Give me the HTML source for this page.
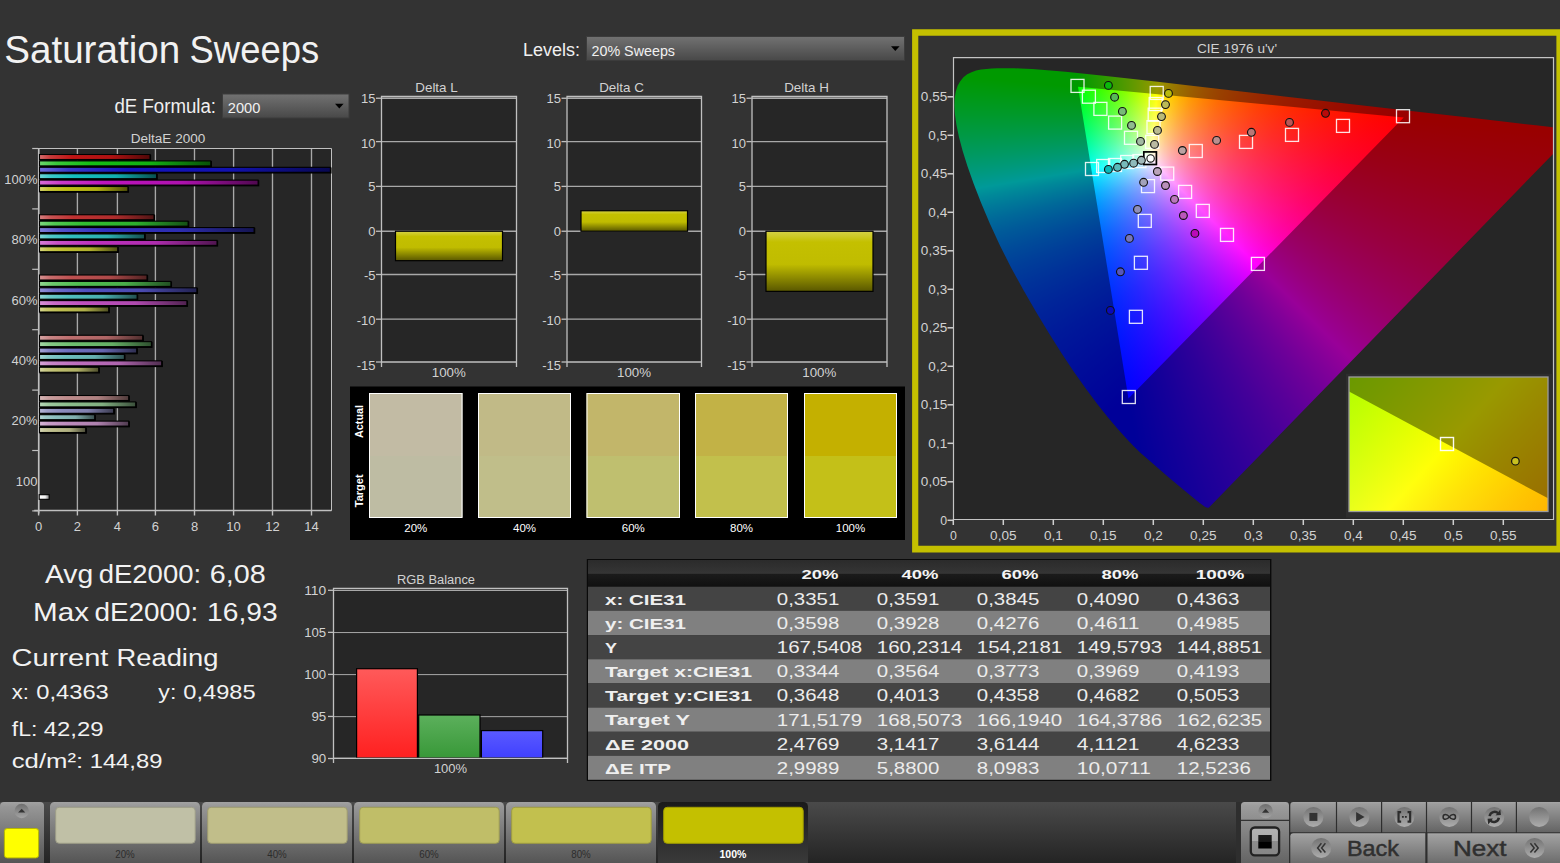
<!DOCTYPE html>
<html><head><meta charset="utf-8"><title>Saturation Sweeps</title>
<style>html,body{margin:0;padding:0}body{width:1560px;height:863px;background:#333333;position:relative;overflow:hidden;font-family:"Liberation Sans", sans-serif}</style></head><body>
<svg width="1560" height="863" viewBox="0 0 1560 863" style="position:absolute;left:0;top:0" font-family='"Liberation Sans", sans-serif'><defs><linearGradient id="g1" x1="0" y1="0" x2="0" y2="1"><stop offset="0" stop-color="#727272"/><stop offset="1" stop-color="#484848"/></linearGradient><linearGradient id="g2" x1="0" y1="0" x2="0" y2="1"><stop offset="0" stop-color="#727272"/><stop offset="1" stop-color="#484848"/></linearGradient><linearGradient id="g3" x1="0" y1="0" x2="1" y2="0"><stop offset="0" stop-color="#d76d6d"/><stop offset="0.1" stop-color="#c83a3a"/><stop offset="0.3" stop-color="#be1414"/><stop offset="0.65" stop-color="#af1212"/><stop offset="1" stop-color="#500808"/></linearGradient><linearGradient id="g4" x1="0" y1="0" x2="1" y2="0"><stop offset="0" stop-color="#6dd76d"/><stop offset="0.1" stop-color="#3ac83a"/><stop offset="0.3" stop-color="#14be14"/><stop offset="0.65" stop-color="#12af12"/><stop offset="1" stop-color="#085008"/></linearGradient><linearGradient id="g5" x1="0" y1="0" x2="1" y2="0"><stop offset="0" stop-color="#6d6dd7"/><stop offset="0.1" stop-color="#3a3ac8"/><stop offset="0.3" stop-color="#1414be"/><stop offset="0.65" stop-color="#1212af"/><stop offset="1" stop-color="#080850"/></linearGradient><linearGradient id="g6" x1="0" y1="0" x2="1" y2="0"><stop offset="0" stop-color="#6dd7d7"/><stop offset="0.1" stop-color="#3ac8c8"/><stop offset="0.3" stop-color="#14bebe"/><stop offset="0.65" stop-color="#12afaf"/><stop offset="1" stop-color="#085050"/></linearGradient><linearGradient id="g7" x1="0" y1="0" x2="1" y2="0"><stop offset="0" stop-color="#d76dd7"/><stop offset="0.1" stop-color="#c83ac8"/><stop offset="0.3" stop-color="#be14be"/><stop offset="0.65" stop-color="#af12af"/><stop offset="1" stop-color="#500850"/></linearGradient><linearGradient id="g8" x1="0" y1="0" x2="1" y2="0"><stop offset="0" stop-color="#d7d76d"/><stop offset="0.1" stop-color="#c8c83a"/><stop offset="0.3" stop-color="#bebe14"/><stop offset="0.65" stop-color="#afaf12"/><stop offset="1" stop-color="#505008"/></linearGradient><linearGradient id="g9" x1="0" y1="0" x2="1" y2="0"><stop offset="0" stop-color="#d77f7f"/><stop offset="0.1" stop-color="#c85252"/><stop offset="0.3" stop-color="#be3131"/><stop offset="0.65" stop-color="#af2d2d"/><stop offset="1" stop-color="#501515"/></linearGradient><linearGradient id="g10" x1="0" y1="0" x2="1" y2="0"><stop offset="0" stop-color="#7fd77f"/><stop offset="0.1" stop-color="#52c852"/><stop offset="0.3" stop-color="#31be31"/><stop offset="0.65" stop-color="#2daf2d"/><stop offset="1" stop-color="#155015"/></linearGradient><linearGradient id="g11" x1="0" y1="0" x2="1" y2="0"><stop offset="0" stop-color="#7f7fd7"/><stop offset="0.1" stop-color="#5252c8"/><stop offset="0.3" stop-color="#3131be"/><stop offset="0.65" stop-color="#2d2daf"/><stop offset="1" stop-color="#151550"/></linearGradient><linearGradient id="g12" x1="0" y1="0" x2="1" y2="0"><stop offset="0" stop-color="#7fd7d7"/><stop offset="0.1" stop-color="#52c8c8"/><stop offset="0.3" stop-color="#31bebe"/><stop offset="0.65" stop-color="#2dafaf"/><stop offset="1" stop-color="#155050"/></linearGradient><linearGradient id="g13" x1="0" y1="0" x2="1" y2="0"><stop offset="0" stop-color="#d77fd7"/><stop offset="0.1" stop-color="#c852c8"/><stop offset="0.3" stop-color="#be31be"/><stop offset="0.65" stop-color="#af2daf"/><stop offset="1" stop-color="#501550"/></linearGradient><linearGradient id="g14" x1="0" y1="0" x2="1" y2="0"><stop offset="0" stop-color="#d7d77f"/><stop offset="0.1" stop-color="#c8c852"/><stop offset="0.3" stop-color="#bebe31"/><stop offset="0.65" stop-color="#afaf2d"/><stop offset="1" stop-color="#505015"/></linearGradient><linearGradient id="g15" x1="0" y1="0" x2="1" y2="0"><stop offset="0" stop-color="#d79292"/><stop offset="0.1" stop-color="#c86c6c"/><stop offset="0.3" stop-color="#be5050"/><stop offset="0.65" stop-color="#af4a4a"/><stop offset="1" stop-color="#502222"/></linearGradient><linearGradient id="g16" x1="0" y1="0" x2="1" y2="0"><stop offset="0" stop-color="#92d792"/><stop offset="0.1" stop-color="#6cc86c"/><stop offset="0.3" stop-color="#50be50"/><stop offset="0.65" stop-color="#4aaf4a"/><stop offset="1" stop-color="#225022"/></linearGradient><linearGradient id="g17" x1="0" y1="0" x2="1" y2="0"><stop offset="0" stop-color="#9292d7"/><stop offset="0.1" stop-color="#6c6cc8"/><stop offset="0.3" stop-color="#5050be"/><stop offset="0.65" stop-color="#4a4aaf"/><stop offset="1" stop-color="#222250"/></linearGradient><linearGradient id="g18" x1="0" y1="0" x2="1" y2="0"><stop offset="0" stop-color="#92d7d7"/><stop offset="0.1" stop-color="#6cc8c8"/><stop offset="0.3" stop-color="#50bebe"/><stop offset="0.65" stop-color="#4aafaf"/><stop offset="1" stop-color="#225050"/></linearGradient><linearGradient id="g19" x1="0" y1="0" x2="1" y2="0"><stop offset="0" stop-color="#d792d7"/><stop offset="0.1" stop-color="#c86cc8"/><stop offset="0.3" stop-color="#be50be"/><stop offset="0.65" stop-color="#af4aaf"/><stop offset="1" stop-color="#502250"/></linearGradient><linearGradient id="g20" x1="0" y1="0" x2="1" y2="0"><stop offset="0" stop-color="#d7d792"/><stop offset="0.1" stop-color="#c8c86c"/><stop offset="0.3" stop-color="#bebe50"/><stop offset="0.65" stop-color="#afaf4a"/><stop offset="1" stop-color="#505022"/></linearGradient><linearGradient id="g21" x1="0" y1="0" x2="1" y2="0"><stop offset="0" stop-color="#d7a5a5"/><stop offset="0.1" stop-color="#c88585"/><stop offset="0.3" stop-color="#be6e6e"/><stop offset="0.65" stop-color="#af6565"/><stop offset="1" stop-color="#502e2e"/></linearGradient><linearGradient id="g22" x1="0" y1="0" x2="1" y2="0"><stop offset="0" stop-color="#a5d7a5"/><stop offset="0.1" stop-color="#85c885"/><stop offset="0.3" stop-color="#6ebe6e"/><stop offset="0.65" stop-color="#65af65"/><stop offset="1" stop-color="#2e502e"/></linearGradient><linearGradient id="g23" x1="0" y1="0" x2="1" y2="0"><stop offset="0" stop-color="#a5a5d7"/><stop offset="0.1" stop-color="#8585c8"/><stop offset="0.3" stop-color="#6e6ebe"/><stop offset="0.65" stop-color="#6565af"/><stop offset="1" stop-color="#2e2e50"/></linearGradient><linearGradient id="g24" x1="0" y1="0" x2="1" y2="0"><stop offset="0" stop-color="#a5d7d7"/><stop offset="0.1" stop-color="#85c8c8"/><stop offset="0.3" stop-color="#6ebebe"/><stop offset="0.65" stop-color="#65afaf"/><stop offset="1" stop-color="#2e5050"/></linearGradient><linearGradient id="g25" x1="0" y1="0" x2="1" y2="0"><stop offset="0" stop-color="#d7a5d7"/><stop offset="0.1" stop-color="#c885c8"/><stop offset="0.3" stop-color="#be6ebe"/><stop offset="0.65" stop-color="#af65af"/><stop offset="1" stop-color="#502e50"/></linearGradient><linearGradient id="g26" x1="0" y1="0" x2="1" y2="0"><stop offset="0" stop-color="#d7d7a5"/><stop offset="0.1" stop-color="#c8c885"/><stop offset="0.3" stop-color="#bebe6e"/><stop offset="0.65" stop-color="#afaf65"/><stop offset="1" stop-color="#50502e"/></linearGradient><linearGradient id="g27" x1="0" y1="0" x2="1" y2="0"><stop offset="0" stop-color="#d7b8b8"/><stop offset="0.1" stop-color="#c89e9e"/><stop offset="0.3" stop-color="#be8c8c"/><stop offset="0.65" stop-color="#af8181"/><stop offset="1" stop-color="#503b3b"/></linearGradient><linearGradient id="g28" x1="0" y1="0" x2="1" y2="0"><stop offset="0" stop-color="#b8d7b8"/><stop offset="0.1" stop-color="#9ec89e"/><stop offset="0.3" stop-color="#8cbe8c"/><stop offset="0.65" stop-color="#81af81"/><stop offset="1" stop-color="#3b503b"/></linearGradient><linearGradient id="g29" x1="0" y1="0" x2="1" y2="0"><stop offset="0" stop-color="#b8b8d7"/><stop offset="0.1" stop-color="#9e9ec8"/><stop offset="0.3" stop-color="#8c8cbe"/><stop offset="0.65" stop-color="#8181af"/><stop offset="1" stop-color="#3b3b50"/></linearGradient><linearGradient id="g30" x1="0" y1="0" x2="1" y2="0"><stop offset="0" stop-color="#b8d7d7"/><stop offset="0.1" stop-color="#9ec8c8"/><stop offset="0.3" stop-color="#8cbebe"/><stop offset="0.65" stop-color="#81afaf"/><stop offset="1" stop-color="#3b5050"/></linearGradient><linearGradient id="g31" x1="0" y1="0" x2="1" y2="0"><stop offset="0" stop-color="#d7b8d7"/><stop offset="0.1" stop-color="#c89ec8"/><stop offset="0.3" stop-color="#be8cbe"/><stop offset="0.65" stop-color="#af81af"/><stop offset="1" stop-color="#503b50"/></linearGradient><linearGradient id="g32" x1="0" y1="0" x2="1" y2="0"><stop offset="0" stop-color="#d7d7b8"/><stop offset="0.1" stop-color="#c8c89e"/><stop offset="0.3" stop-color="#bebe8c"/><stop offset="0.65" stop-color="#afaf81"/><stop offset="1" stop-color="#50503b"/></linearGradient><linearGradient id="g33" x1="0" y1="0" x2="1" y2="0"><stop offset="0" stop-color="#ffffff"/><stop offset="0.6" stop-color="#f0f0f0"/><stop offset="1" stop-color="#777"/></linearGradient><linearGradient id="g34" x1="0" y1="0" x2="0" y2="1"><stop offset="0" stop-color="#d6d248"/><stop offset="0.18" stop-color="#c4c000"/><stop offset="0.55" stop-color="#c0bc00"/><stop offset="1" stop-color="#595700"/></linearGradient><linearGradient id="g35" x1="0" y1="0" x2="0" y2="1"><stop offset="0" stop-color="#d6d248"/><stop offset="0.18" stop-color="#c4c000"/><stop offset="0.55" stop-color="#c0bc00"/><stop offset="1" stop-color="#595700"/></linearGradient><linearGradient id="g36" x1="0" y1="0" x2="0" y2="1"><stop offset="0" stop-color="#d6d248"/><stop offset="0.18" stop-color="#c4c000"/><stop offset="0.55" stop-color="#c0bc00"/><stop offset="1" stop-color="#595700"/></linearGradient><linearGradient id="g37" x1="0" y1="0" x2="0" y2="1"><stop offset="0" stop-color="#ff5a5a"/><stop offset="1" stop-color="#ff2020"/></linearGradient><linearGradient id="g38" x1="0" y1="0" x2="0" y2="1"><stop offset="0" stop-color="#5cb05c"/><stop offset="1" stop-color="#389838"/></linearGradient><linearGradient id="g39" x1="0" y1="0" x2="0" y2="1"><stop offset="0" stop-color="#5a5aff"/><stop offset="1" stop-color="#4040ff"/></linearGradient><linearGradient id="g40" x1="0" y1="0" x2="0" y2="1"><stop offset="0" stop-color="#2b2b2b"/><stop offset="0.5" stop-color="#353535"/><stop offset="0.52" stop-color="#1b1b1b"/><stop offset="1" stop-color="#101010"/></linearGradient><linearGradient id="g41" x1="0" y1="0" x2="0" y2="1"><stop offset="0" stop-color="#4a4a4a"/><stop offset="1" stop-color="#242424"/></linearGradient><linearGradient id="g42" x1="0" y1="0" x2="0" y2="1"><stop offset="0" stop-color="#a2a2a2"/><stop offset="0.08" stop-color="#969696"/><stop offset="1" stop-color="#555555"/></linearGradient><linearGradient id="g43" x1="0" y1="0" x2="0" y2="1"><stop offset="0" stop-color="#1a1a1a"/><stop offset="1" stop-color="#3a3a3a"/></linearGradient><linearGradient id="g44" x1="0" y1="0" x2="0" y2="1"><stop offset="0" stop-color="#6e6e6e"/><stop offset="1" stop-color="#a4a4a4"/></linearGradient><linearGradient id="g45" x1="0" y1="0" x2="0" y2="1"><stop offset="0" stop-color="#a6a6a6"/><stop offset="0.06" stop-color="#9c9c9c"/><stop offset="1" stop-color="#646464"/></linearGradient><linearGradient id="g46" x1="0" y1="0" x2="0" y2="1"><stop offset="0" stop-color="#aaaaaa"/><stop offset="0.06" stop-color="#a0a0a0"/><stop offset="1" stop-color="#6c6c6c"/></linearGradient><linearGradient id="g47" x1="0" y1="0" x2="0" y2="1"><stop offset="0" stop-color="#6e6e6e"/><stop offset="1" stop-color="#a4a4a4"/></linearGradient><linearGradient id="g48" x1="0" y1="0" x2="0" y2="1"><stop offset="0" stop-color="#b4b4b4"/><stop offset="0.5" stop-color="#aaaaaa"/><stop offset="0.5" stop-color="#8c8c8c"/><stop offset="1" stop-color="#868686"/></linearGradient><linearGradient id="g49" x1="0" y1="0" x2="0" y2="1"><stop offset="0" stop-color="#1c1c1c"/><stop offset="0.48" stop-color="#161616"/><stop offset="0.5" stop-color="#000"/><stop offset="1" stop-color="#000"/></linearGradient><linearGradient id="g50" x1="0" y1="0" x2="0" y2="1"><stop offset="0" stop-color="#727272"/><stop offset="1" stop-color="#adadad"/></linearGradient></defs><text x="4.2" y="63" font-size="38" textLength="176" lengthAdjust="spacingAndGlyphs" fill="#f2f2f2">Saturation</text>
<text x="189.6" y="63" font-size="38" textLength="129.5" lengthAdjust="spacingAndGlyphs" fill="#f2f2f2">Sweeps</text>
<text x="523" y="56" font-size="18.8" textLength="57" lengthAdjust="spacingAndGlyphs" fill="#f0f0f0">Levels:</text>
<text x="114.5" y="112.8" font-size="19.5" textLength="101.5" lengthAdjust="spacingAndGlyphs" fill="#f0f0f0">dE Formula:</text>
<rect x="222.5" y="94" width="126.5" height="24" fill="url(#g1)" stroke="#3c3c3c" stroke-width="1"/><text x="227.8" y="112.8" font-size="14.5" textLength="32.5" lengthAdjust="spacingAndGlyphs" fill="#f0f0f0">2000</text><path d="M335 103.8h8.6l-4.3 4.8z" fill="#000"/>
<rect x="586.5" y="36.5" width="318" height="24" fill="url(#g2)" stroke="#3c3c3c" stroke-width="1"/><text x="591.5" y="55.9" font-size="14.5" textLength="83.5" lengthAdjust="spacingAndGlyphs" fill="#f0f0f0">20% Sweeps</text><path d="M891 46.3h8.6l-4.3 4.8z" fill="#000"/>
<rect x="38.2" y="148" width="292.8" height="362.5" fill="#262626"/>
<text x="168" y="143" font-size="12.5" text-anchor="middle" textLength="74.5" lengthAdjust="spacingAndGlyphs" fill="#d2d2d2">DeltaE 2000</text>
<line x1="77.4" y1="148" x2="77.4" y2="510.5" stroke="#a8a8a8" stroke-width="1.35"/>
<line x1="117.4" y1="148" x2="117.4" y2="510.5" stroke="#a8a8a8" stroke-width="1.35"/>
<line x1="155.4" y1="148" x2="155.4" y2="510.5" stroke="#a8a8a8" stroke-width="1.35"/>
<line x1="194.5" y1="148" x2="194.5" y2="510.5" stroke="#a8a8a8" stroke-width="1.35"/>
<line x1="233.6" y1="148" x2="233.6" y2="510.5" stroke="#a8a8a8" stroke-width="1.35"/>
<line x1="272.5" y1="148" x2="272.5" y2="510.5" stroke="#a8a8a8" stroke-width="1.35"/>
<line x1="311.5" y1="148" x2="311.5" y2="510.5" stroke="#a8a8a8" stroke-width="1.35"/>
<path d="M38.7 148.5H331.5V510.5H38.7Z" fill="none" stroke="#c0c0c0" stroke-width="1"/>
<line x1="38.7" y1="148" x2="38.7" y2="513.5" stroke="#c0c0c0" stroke-width="1.6"/>
<line x1="34.2" y1="510.5" x2="331.5" y2="510.5" stroke="#c0c0c0" stroke-width="1.6"/>
<line x1="38.6" y1="510.5" x2="38.6" y2="515.5" stroke="#c0c0c0" stroke-width="1.4"/>
<text x="38.6" y="531" font-size="13" text-anchor="middle" fill="#d2d2d2">0</text>
<line x1="77.4" y1="510.5" x2="77.4" y2="515.5" stroke="#c0c0c0" stroke-width="1.4"/>
<text x="77.4" y="531" font-size="13" text-anchor="middle" fill="#d2d2d2">2</text>
<line x1="117.4" y1="510.5" x2="117.4" y2="515.5" stroke="#c0c0c0" stroke-width="1.4"/>
<text x="117.4" y="531" font-size="13" text-anchor="middle" fill="#d2d2d2">4</text>
<line x1="155.4" y1="510.5" x2="155.4" y2="515.5" stroke="#c0c0c0" stroke-width="1.4"/>
<text x="155.4" y="531" font-size="13" text-anchor="middle" fill="#d2d2d2">6</text>
<line x1="194.5" y1="510.5" x2="194.5" y2="515.5" stroke="#c0c0c0" stroke-width="1.4"/>
<text x="194.5" y="531" font-size="13" text-anchor="middle" fill="#d2d2d2">8</text>
<line x1="233.6" y1="510.5" x2="233.6" y2="515.5" stroke="#c0c0c0" stroke-width="1.4"/>
<text x="233.6" y="531" font-size="13" text-anchor="middle" fill="#d2d2d2">10</text>
<line x1="272.5" y1="510.5" x2="272.5" y2="515.5" stroke="#c0c0c0" stroke-width="1.4"/>
<text x="272.5" y="531" font-size="13" text-anchor="middle" fill="#d2d2d2">12</text>
<line x1="311.5" y1="510.5" x2="311.5" y2="515.5" stroke="#c0c0c0" stroke-width="1.4"/>
<text x="311.5" y="531" font-size="13" text-anchor="middle" fill="#d2d2d2">14</text>
<line x1="32.2" y1="148.5" x2="38.2" y2="148.5" stroke="#c0c0c0" stroke-width="1.2"/>
<line x1="32.2" y1="208.9" x2="38.2" y2="208.9" stroke="#c0c0c0" stroke-width="1.2"/>
<line x1="32.2" y1="269.3" x2="38.2" y2="269.3" stroke="#c0c0c0" stroke-width="1.2"/>
<line x1="32.2" y1="329.7" x2="38.2" y2="329.7" stroke="#c0c0c0" stroke-width="1.2"/>
<line x1="32.2" y1="390.1" x2="38.2" y2="390.1" stroke="#c0c0c0" stroke-width="1.2"/>
<line x1="32.2" y1="450.5" x2="38.2" y2="450.5" stroke="#c0c0c0" stroke-width="1.2"/>
<line x1="32.2" y1="510.9" x2="38.2" y2="510.9" stroke="#c0c0c0" stroke-width="1.2"/>
<rect x="40.1" y="155.2" width="110.5" height="5" fill="#000" stroke="#000" stroke-width="1.1"/><rect x="39.5" y="154.5" width="110.5" height="5" fill="url(#g3)" stroke="#000" stroke-width="1.1"/>
<rect x="40.1" y="161.6" width="171.3" height="5" fill="#000" stroke="#000" stroke-width="1.1"/><rect x="39.5" y="160.9" width="171.3" height="5" fill="url(#g4)" stroke="#000" stroke-width="1.1"/>
<rect x="40.1" y="168" width="290.9" height="5" fill="#000" stroke="#000" stroke-width="1.1"/><rect x="39.5" y="167.3" width="290.9" height="5" fill="url(#g5)" stroke="#000" stroke-width="1.1"/>
<rect x="40.1" y="174.4" width="117.1" height="5" fill="#000" stroke="#000" stroke-width="1.1"/><rect x="39.5" y="173.7" width="117.1" height="5" fill="url(#g6)" stroke="#000" stroke-width="1.1"/>
<rect x="40.1" y="180.8" width="218.6" height="5" fill="#000" stroke="#000" stroke-width="1.1"/><rect x="39.5" y="180.1" width="218.6" height="5" fill="url(#g7)" stroke="#000" stroke-width="1.1"/>
<rect x="40.1" y="187.2" width="88.4" height="5" fill="#000" stroke="#000" stroke-width="1.1"/><rect x="39.5" y="186.5" width="88.4" height="5" fill="url(#g8)" stroke="#000" stroke-width="1.1"/>
<text x="37.5" y="184.2" font-size="13" text-anchor="end" fill="#d2d2d2">100%</text>
<rect x="40.1" y="215.45" width="114.5" height="5" fill="#000" stroke="#000" stroke-width="1.1"/><rect x="39.5" y="214.75" width="114.5" height="5" fill="url(#g9)" stroke="#000" stroke-width="1.1"/>
<rect x="40.1" y="221.85" width="148.6" height="5" fill="#000" stroke="#000" stroke-width="1.1"/><rect x="39.5" y="221.15" width="148.6" height="5" fill="url(#g10)" stroke="#000" stroke-width="1.1"/>
<rect x="40.1" y="228.25" width="214.6" height="5" fill="#000" stroke="#000" stroke-width="1.1"/><rect x="39.5" y="227.55" width="214.6" height="5" fill="url(#g11)" stroke="#000" stroke-width="1.1"/>
<rect x="40.1" y="234.65" width="105.1" height="5" fill="#000" stroke="#000" stroke-width="1.1"/><rect x="39.5" y="233.95" width="105.1" height="5" fill="url(#g12)" stroke="#000" stroke-width="1.1"/>
<rect x="40.1" y="241.05" width="177.5" height="5" fill="#000" stroke="#000" stroke-width="1.1"/><rect x="39.5" y="240.35" width="177.5" height="5" fill="url(#g13)" stroke="#000" stroke-width="1.1"/>
<rect x="40.1" y="247.45" width="78.2" height="5" fill="#000" stroke="#000" stroke-width="1.1"/><rect x="39.5" y="246.75" width="78.2" height="5" fill="url(#g14)" stroke="#000" stroke-width="1.1"/>
<text x="37.5" y="244.45" font-size="13" text-anchor="end" fill="#d2d2d2">80%</text>
<rect x="40.1" y="275.7" width="107.5" height="5" fill="#000" stroke="#000" stroke-width="1.1"/><rect x="39.5" y="275" width="107.5" height="5" fill="url(#g15)" stroke="#000" stroke-width="1.1"/>
<rect x="40.1" y="282.1" width="131.4" height="5" fill="#000" stroke="#000" stroke-width="1.1"/><rect x="39.5" y="281.4" width="131.4" height="5" fill="url(#g16)" stroke="#000" stroke-width="1.1"/>
<rect x="40.1" y="288.5" width="157.4" height="5" fill="#000" stroke="#000" stroke-width="1.1"/><rect x="39.5" y="287.8" width="157.4" height="5" fill="url(#g17)" stroke="#000" stroke-width="1.1"/>
<rect x="40.1" y="294.9" width="97.6" height="5" fill="#000" stroke="#000" stroke-width="1.1"/><rect x="39.5" y="294.2" width="97.6" height="5" fill="url(#g18)" stroke="#000" stroke-width="1.1"/>
<rect x="40.1" y="301.3" width="147.4" height="5" fill="#000" stroke="#000" stroke-width="1.1"/><rect x="39.5" y="300.6" width="147.4" height="5" fill="url(#g19)" stroke="#000" stroke-width="1.1"/>
<rect x="40.1" y="307.7" width="69.2" height="5" fill="#000" stroke="#000" stroke-width="1.1"/><rect x="39.5" y="307" width="69.2" height="5" fill="url(#g20)" stroke="#000" stroke-width="1.1"/>
<text x="37.5" y="304.7" font-size="13" text-anchor="end" fill="#d2d2d2">60%</text>
<rect x="40.1" y="335.95" width="103.2" height="5" fill="#000" stroke="#000" stroke-width="1.1"/><rect x="39.5" y="335.25" width="103.2" height="5" fill="url(#g21)" stroke="#000" stroke-width="1.1"/>
<rect x="40.1" y="342.35" width="111.9" height="5" fill="#000" stroke="#000" stroke-width="1.1"/><rect x="39.5" y="341.65" width="111.9" height="5" fill="url(#g22)" stroke="#000" stroke-width="1.1"/>
<rect x="40.1" y="348.75" width="97.2" height="5" fill="#000" stroke="#000" stroke-width="1.1"/><rect x="39.5" y="348.05" width="97.2" height="5" fill="url(#g23)" stroke="#000" stroke-width="1.1"/>
<rect x="40.1" y="355.15" width="84.9" height="5" fill="#000" stroke="#000" stroke-width="1.1"/><rect x="39.5" y="354.45" width="84.9" height="5" fill="url(#g24)" stroke="#000" stroke-width="1.1"/>
<rect x="40.1" y="361.55" width="122.2" height="5" fill="#000" stroke="#000" stroke-width="1.1"/><rect x="39.5" y="360.85" width="122.2" height="5" fill="url(#g25)" stroke="#000" stroke-width="1.1"/>
<rect x="40.1" y="367.95" width="59.2" height="5" fill="#000" stroke="#000" stroke-width="1.1"/><rect x="39.5" y="367.25" width="59.2" height="5" fill="url(#g26)" stroke="#000" stroke-width="1.1"/>
<text x="37.5" y="364.95" font-size="13" text-anchor="end" fill="#d2d2d2">40%</text>
<rect x="40.1" y="396.2" width="89.2" height="5" fill="#000" stroke="#000" stroke-width="1.1"/><rect x="39.5" y="395.5" width="89.2" height="5" fill="url(#g27)" stroke="#000" stroke-width="1.1"/>
<rect x="40.1" y="402.6" width="96.2" height="5" fill="#000" stroke="#000" stroke-width="1.1"/><rect x="39.5" y="401.9" width="96.2" height="5" fill="url(#g28)" stroke="#000" stroke-width="1.1"/>
<rect x="40.1" y="409" width="74.2" height="5" fill="#000" stroke="#000" stroke-width="1.1"/><rect x="39.5" y="408.3" width="74.2" height="5" fill="url(#g29)" stroke="#000" stroke-width="1.1"/>
<rect x="40.1" y="415.4" width="55.2" height="5" fill="#000" stroke="#000" stroke-width="1.1"/><rect x="39.5" y="414.7" width="55.2" height="5" fill="url(#g30)" stroke="#000" stroke-width="1.1"/>
<rect x="40.1" y="421.8" width="89.2" height="5" fill="#000" stroke="#000" stroke-width="1.1"/><rect x="39.5" y="421.1" width="89.2" height="5" fill="url(#g31)" stroke="#000" stroke-width="1.1"/>
<rect x="40.1" y="428.2" width="46.2" height="5" fill="#000" stroke="#000" stroke-width="1.1"/><rect x="39.5" y="427.5" width="46.2" height="5" fill="url(#g32)" stroke="#000" stroke-width="1.1"/>
<text x="37.5" y="425.2" font-size="13" text-anchor="end" fill="#d2d2d2">20%</text>
<text x="37.5" y="486" font-size="13" text-anchor="end" fill="#d2d2d2">100</text>
<rect x="39.2" y="494.7" width="10" height="4.6" fill="url(#g33)" stroke="#000" stroke-width="1.1"/>
<rect x="381" y="96" width="135.5" height="266" fill="#262626"/><line x1="381" y1="98.25" x2="516.5" y2="98.25" stroke="#a8a8a8" stroke-width="1.3"/><line x1="376" y1="98.25" x2="381" y2="98.25" stroke="#c0c0c0" stroke-width="1.3"/><line x1="381" y1="141.6" x2="516.5" y2="141.6" stroke="#a8a8a8" stroke-width="1.3"/><line x1="376" y1="141.6" x2="381" y2="141.6" stroke="#c0c0c0" stroke-width="1.3"/><line x1="381" y1="186.4" x2="516.5" y2="186.4" stroke="#a8a8a8" stroke-width="1.3"/><line x1="376" y1="186.4" x2="381" y2="186.4" stroke="#c0c0c0" stroke-width="1.3"/><line x1="381" y1="231.25" x2="516.5" y2="231.25" stroke="#a8a8a8" stroke-width="1.3"/><line x1="376" y1="231.25" x2="381" y2="231.25" stroke="#c0c0c0" stroke-width="1.3"/><line x1="381" y1="274.5" x2="516.5" y2="274.5" stroke="#a8a8a8" stroke-width="1.3"/><line x1="376" y1="274.5" x2="381" y2="274.5" stroke="#c0c0c0" stroke-width="1.3"/><line x1="381" y1="319.2" x2="516.5" y2="319.2" stroke="#a8a8a8" stroke-width="1.3"/><line x1="376" y1="319.2" x2="381" y2="319.2" stroke="#c0c0c0" stroke-width="1.3"/><text x="375.5" y="103.45" font-size="13" text-anchor="end" fill="#d2d2d2">15</text><text x="375.5" y="148.3" font-size="13" text-anchor="end" fill="#d2d2d2">10</text><text x="375.5" y="191.45" font-size="13" text-anchor="end" fill="#d2d2d2">5</text><text x="375.5" y="236.45" font-size="13" text-anchor="end" fill="#d2d2d2">0</text><text x="375.5" y="280.2" font-size="13" text-anchor="end" fill="#d2d2d2">-5</text><text x="375.5" y="324.7" font-size="13" text-anchor="end" fill="#d2d2d2">-10</text><text x="375.5" y="369.5" font-size="13" text-anchor="end" fill="#d2d2d2">-15</text><line x1="376" y1="362" x2="381" y2="362" stroke="#c0c0c0" stroke-width="1.3"/><path d="M381.5 367V96.5H516.5V367" fill="none" stroke="#c0c0c0" stroke-width="1.3"/><line x1="381" y1="362" x2="516.5" y2="362" stroke="#c0c0c0" stroke-width="1.3"/><rect x="395.5" y="231.25" width="107" height="29.44" fill="url(#g34)" stroke="#000" stroke-width="1.2"/><text x="436.5" y="92" font-size="13.4" text-anchor="middle" fill="#d2d2d2">Delta L</text><text x="448.75" y="377.4" font-size="13.3" text-anchor="middle" fill="#d2d2d2">100%</text>
<rect x="566.5" y="96" width="135" height="266" fill="#262626"/><line x1="566.5" y1="98.25" x2="701.5" y2="98.25" stroke="#a8a8a8" stroke-width="1.3"/><line x1="561.5" y1="98.25" x2="566.5" y2="98.25" stroke="#c0c0c0" stroke-width="1.3"/><line x1="566.5" y1="141.6" x2="701.5" y2="141.6" stroke="#a8a8a8" stroke-width="1.3"/><line x1="561.5" y1="141.6" x2="566.5" y2="141.6" stroke="#c0c0c0" stroke-width="1.3"/><line x1="566.5" y1="186.4" x2="701.5" y2="186.4" stroke="#a8a8a8" stroke-width="1.3"/><line x1="561.5" y1="186.4" x2="566.5" y2="186.4" stroke="#c0c0c0" stroke-width="1.3"/><line x1="566.5" y1="231.25" x2="701.5" y2="231.25" stroke="#a8a8a8" stroke-width="1.3"/><line x1="561.5" y1="231.25" x2="566.5" y2="231.25" stroke="#c0c0c0" stroke-width="1.3"/><line x1="566.5" y1="274.5" x2="701.5" y2="274.5" stroke="#a8a8a8" stroke-width="1.3"/><line x1="561.5" y1="274.5" x2="566.5" y2="274.5" stroke="#c0c0c0" stroke-width="1.3"/><line x1="566.5" y1="319.2" x2="701.5" y2="319.2" stroke="#a8a8a8" stroke-width="1.3"/><line x1="561.5" y1="319.2" x2="566.5" y2="319.2" stroke="#c0c0c0" stroke-width="1.3"/><text x="561" y="103.45" font-size="13" text-anchor="end" fill="#d2d2d2">15</text><text x="561" y="148.3" font-size="13" text-anchor="end" fill="#d2d2d2">10</text><text x="561" y="191.45" font-size="13" text-anchor="end" fill="#d2d2d2">5</text><text x="561" y="236.45" font-size="13" text-anchor="end" fill="#d2d2d2">0</text><text x="561" y="280.2" font-size="13" text-anchor="end" fill="#d2d2d2">-5</text><text x="561" y="324.7" font-size="13" text-anchor="end" fill="#d2d2d2">-10</text><text x="561" y="369.5" font-size="13" text-anchor="end" fill="#d2d2d2">-15</text><line x1="561.5" y1="362" x2="566.5" y2="362" stroke="#c0c0c0" stroke-width="1.3"/><path d="M567 367V96.5H701.5V367" fill="none" stroke="#c0c0c0" stroke-width="1.3"/><line x1="566.5" y1="362" x2="701.5" y2="362" stroke="#c0c0c0" stroke-width="1.3"/><rect x="581" y="210.74" width="106.5" height="20.51" fill="url(#g35)" stroke="#000" stroke-width="1.2"/><text x="621.5" y="92" font-size="13.4" text-anchor="middle" fill="#d2d2d2">Delta C</text><text x="634" y="377.4" font-size="13.3" text-anchor="middle" fill="#d2d2d2">100%</text>
<rect x="751.5" y="96" width="135.5" height="266" fill="#262626"/><line x1="751.5" y1="98.25" x2="887" y2="98.25" stroke="#a8a8a8" stroke-width="1.3"/><line x1="746.5" y1="98.25" x2="751.5" y2="98.25" stroke="#c0c0c0" stroke-width="1.3"/><line x1="751.5" y1="141.6" x2="887" y2="141.6" stroke="#a8a8a8" stroke-width="1.3"/><line x1="746.5" y1="141.6" x2="751.5" y2="141.6" stroke="#c0c0c0" stroke-width="1.3"/><line x1="751.5" y1="186.4" x2="887" y2="186.4" stroke="#a8a8a8" stroke-width="1.3"/><line x1="746.5" y1="186.4" x2="751.5" y2="186.4" stroke="#c0c0c0" stroke-width="1.3"/><line x1="751.5" y1="231.25" x2="887" y2="231.25" stroke="#a8a8a8" stroke-width="1.3"/><line x1="746.5" y1="231.25" x2="751.5" y2="231.25" stroke="#c0c0c0" stroke-width="1.3"/><line x1="751.5" y1="274.5" x2="887" y2="274.5" stroke="#a8a8a8" stroke-width="1.3"/><line x1="746.5" y1="274.5" x2="751.5" y2="274.5" stroke="#c0c0c0" stroke-width="1.3"/><line x1="751.5" y1="319.2" x2="887" y2="319.2" stroke="#a8a8a8" stroke-width="1.3"/><line x1="746.5" y1="319.2" x2="751.5" y2="319.2" stroke="#c0c0c0" stroke-width="1.3"/><text x="746" y="103.45" font-size="13" text-anchor="end" fill="#d2d2d2">15</text><text x="746" y="148.3" font-size="13" text-anchor="end" fill="#d2d2d2">10</text><text x="746" y="191.45" font-size="13" text-anchor="end" fill="#d2d2d2">5</text><text x="746" y="236.45" font-size="13" text-anchor="end" fill="#d2d2d2">0</text><text x="746" y="280.2" font-size="13" text-anchor="end" fill="#d2d2d2">-5</text><text x="746" y="324.7" font-size="13" text-anchor="end" fill="#d2d2d2">-10</text><text x="746" y="369.5" font-size="13" text-anchor="end" fill="#d2d2d2">-15</text><line x1="746.5" y1="362" x2="751.5" y2="362" stroke="#c0c0c0" stroke-width="1.3"/><path d="M752 367V96.5H887V367" fill="none" stroke="#c0c0c0" stroke-width="1.3"/><line x1="751.5" y1="362" x2="887" y2="362" stroke="#c0c0c0" stroke-width="1.3"/><rect x="766" y="231.25" width="107" height="60.11" fill="url(#g36)" stroke="#000" stroke-width="1.2"/><text x="806.5" y="92" font-size="13.4" text-anchor="middle" fill="#d2d2d2">Delta H</text><text x="819.25" y="377.4" font-size="13.3" text-anchor="middle" fill="#d2d2d2">100%</text>
<rect x="350" y="386.5" width="555" height="153.5" fill="#000"/>
<rect x="369" y="393" width="93.5" height="63" fill="#c2bba4"/>
<rect x="369" y="456" width="93.5" height="61.5" fill="#bebca3"/>
<rect x="369.5" y="393.5" width="92.5" height="124" fill="none" stroke="#fff" stroke-width="1"/>
<text x="415.75" y="532" font-size="11.5" text-anchor="middle" fill="#fff">20%</text>
<rect x="478" y="393" width="93" height="63" fill="#c1ba87"/>
<rect x="478" y="456" width="93" height="61.5" fill="#c0be8a"/>
<rect x="478.5" y="393.5" width="92" height="124" fill="none" stroke="#fff" stroke-width="1"/>
<text x="524.5" y="532" font-size="11.5" text-anchor="middle" fill="#fff">40%</text>
<rect x="586.5" y="393" width="93.5" height="63" fill="#c2b66a"/>
<rect x="586.5" y="456" width="93.5" height="61.5" fill="#bfbf6f"/>
<rect x="587" y="393.5" width="92.5" height="124" fill="none" stroke="#fff" stroke-width="1"/>
<text x="633.25" y="532" font-size="11.5" text-anchor="middle" fill="#fff">60%</text>
<rect x="695" y="393" width="93" height="63" fill="#c2b246"/>
<rect x="695" y="456" width="93" height="61.5" fill="#c2c04c"/>
<rect x="695.5" y="393.5" width="92" height="124" fill="none" stroke="#fff" stroke-width="1"/>
<text x="741.5" y="532" font-size="11.5" text-anchor="middle" fill="#fff">80%</text>
<rect x="804" y="393" width="93" height="63" fill="#c4b000"/>
<rect x="804" y="456" width="93" height="61.5" fill="#c4c018"/>
<rect x="804.5" y="393.5" width="92" height="124" fill="none" stroke="#fff" stroke-width="1"/>
<text x="850.5" y="532" font-size="11.5" text-anchor="middle" fill="#fff">100%</text>
<text transform="translate(362.5,438) rotate(-90)" font-size="11.5" font-weight="bold" fill="#fff" textLength="33" lengthAdjust="spacingAndGlyphs">Actual</text>
<text transform="translate(362.5,507.3) rotate(-90)" font-size="11.5" font-weight="bold" fill="#fff" textLength="33" lengthAdjust="spacingAndGlyphs">Target</text>
<path fill-rule="evenodd" fill="#c4c000" d="M912.1 29.3H1566V552.6H912.1ZM918.3 35.8H1556.4V545.8H918.3Z"/>
<text x="1237" y="52.5" font-size="12.5" text-anchor="middle" textLength="80" lengthAdjust="spacingAndGlyphs" fill="#d2d2d2">CIE 1976 u'v'</text>
<rect x="953" y="58" width="600.5" height="461.5" fill="#262626"/>
<text x="45.01" y="582.5" font-size="25.5" textLength="48.2" lengthAdjust="spacingAndGlyphs" fill="#f2f2f2">Avg</text>
<text x="98.71" y="582.5" font-size="25.5" textLength="102.39" lengthAdjust="spacingAndGlyphs" fill="#f2f2f2">dE2000:</text>
<text x="209.71" y="582.5" font-size="25.5" textLength="56" lengthAdjust="spacingAndGlyphs" fill="#f2f2f2">6,08</text>
<text x="33.01" y="620.5" font-size="25.5" textLength="55.99" lengthAdjust="spacingAndGlyphs" fill="#f2f2f2">Max</text>
<text x="94.51" y="620.5" font-size="25.5" textLength="103.8" lengthAdjust="spacingAndGlyphs" fill="#f2f2f2">dE2000:</text>
<text x="207.11" y="620.5" font-size="25.5" textLength="70.49" lengthAdjust="spacingAndGlyphs" fill="#f2f2f2">16,93</text>
<text x="11.64" y="665.5" font-size="24.7" textLength="96.82" lengthAdjust="spacingAndGlyphs" fill="#f2f2f2">Current</text>
<text x="116.54" y="665.5" font-size="24.7" textLength="101.82" lengthAdjust="spacingAndGlyphs" fill="#f2f2f2">Reading</text>
<text x="11.77" y="698.8" font-size="21" textLength="17.19" lengthAdjust="spacingAndGlyphs" fill="#f2f2f2">x:</text>
<text x="36.27" y="698.8" font-size="21" textLength="72.49" lengthAdjust="spacingAndGlyphs" fill="#f2f2f2">0,4363</text>
<text x="158.36" y="698.8" font-size="21" textLength="17.99" lengthAdjust="spacingAndGlyphs" fill="#f2f2f2">y:</text>
<text x="183.36" y="698.8" font-size="21" textLength="72.29" lengthAdjust="spacingAndGlyphs" fill="#f2f2f2">0,4985</text>
<text x="11.77" y="736.4" font-size="21" textLength="25.59" lengthAdjust="spacingAndGlyphs" fill="#f2f2f2">fL:</text>
<text x="43.77" y="736.4" font-size="21" textLength="59.79" lengthAdjust="spacingAndGlyphs" fill="#f2f2f2">42,29</text>
<text x="11.77" y="768.4" font-size="21" textLength="71.39" lengthAdjust="spacingAndGlyphs" fill="#f2f2f2">cd/m²:</text>
<text x="89.67" y="768.4" font-size="21" textLength="72.79" lengthAdjust="spacingAndGlyphs" fill="#f2f2f2">144,89</text>
<rect x="333" y="588" width="234.5" height="170" fill="#262626"/>
<text x="436" y="583.5" font-size="12.5" text-anchor="middle" textLength="78" lengthAdjust="spacingAndGlyphs" fill="#d2d2d2">RGB Balance</text>
<line x1="333" y1="590.5" x2="567.5" y2="590.5" stroke="#a8a8a8" stroke-width="1"/>
<line x1="328" y1="590.3" x2="333" y2="590.3" stroke="#c0c0c0" stroke-width="1.3"/>
<text x="326.2" y="594.6" font-size="12.5" text-anchor="end" textLength="22" lengthAdjust="spacingAndGlyphs" fill="#d2d2d2">110</text>
<line x1="333" y1="632.55" x2="567.5" y2="632.55" stroke="#a8a8a8" stroke-width="1"/>
<line x1="328" y1="632.35" x2="333" y2="632.35" stroke="#c0c0c0" stroke-width="1.3"/>
<text x="326.2" y="636.65" font-size="12.5" text-anchor="end" textLength="22" lengthAdjust="spacingAndGlyphs" fill="#d2d2d2">105</text>
<line x1="333" y1="674.6" x2="567.5" y2="674.6" stroke="#a8a8a8" stroke-width="1"/>
<line x1="328" y1="674.4" x2="333" y2="674.4" stroke="#c0c0c0" stroke-width="1.3"/>
<text x="326.2" y="678.7" font-size="12.5" text-anchor="end" textLength="22" lengthAdjust="spacingAndGlyphs" fill="#d2d2d2">100</text>
<line x1="333" y1="716.65" x2="567.5" y2="716.65" stroke="#a8a8a8" stroke-width="1"/>
<line x1="328" y1="716.45" x2="333" y2="716.45" stroke="#c0c0c0" stroke-width="1.3"/>
<text x="326.2" y="720.75" font-size="12.5" text-anchor="end" textLength="14.8" lengthAdjust="spacingAndGlyphs" fill="#d2d2d2">95</text>
<line x1="328" y1="758.5" x2="333" y2="758.5" stroke="#c0c0c0" stroke-width="1.3"/>
<text x="326.2" y="762.8" font-size="12.5" text-anchor="end" textLength="14.8" lengthAdjust="spacingAndGlyphs" fill="#d2d2d2">90</text>
<path d="M333.5 763V588.5H567.5V763" fill="none" stroke="#c0c0c0" stroke-width="1.3"/>
<line x1="333" y1="758.3" x2="567.5" y2="758.3" stroke="#c0c0c0" stroke-width="1.3"/>
<rect x="356.6" y="668.7" width="60.8" height="89.3" fill="url(#g37)" stroke="#000" stroke-width="1.2"/>
<rect x="418.7" y="715" width="61.3" height="43" fill="url(#g38)" stroke="#000" stroke-width="1.2"/>
<rect x="481.4" y="730.6" width="61.3" height="27.4" fill="url(#g39)" stroke="#000" stroke-width="1.2"/>
<line x1="333" y1="758.3" x2="567.5" y2="758.3" stroke="#c0c0c0" stroke-width="1.3"/>
<text x="450.5" y="773" font-size="13" text-anchor="middle" fill="#d2d2d2">100%</text>
<rect x="586.8" y="559" width="684.6" height="222" fill="#0a0a0a"/>
<rect x="588" y="560" width="682" height="26.8" fill="url(#g40)"/>
<text x="820" y="578.8" font-size="13" text-anchor="middle" textLength="37" lengthAdjust="spacingAndGlyphs" font-weight="bold" fill="#f4f4f4">20%</text>
<text x="920" y="578.8" font-size="13" text-anchor="middle" textLength="37" lengthAdjust="spacingAndGlyphs" font-weight="bold" fill="#f4f4f4">40%</text>
<text x="1020" y="578.8" font-size="13" text-anchor="middle" textLength="37" lengthAdjust="spacingAndGlyphs" font-weight="bold" fill="#f4f4f4">60%</text>
<text x="1120" y="578.8" font-size="13" text-anchor="middle" textLength="37" lengthAdjust="spacingAndGlyphs" font-weight="bold" fill="#f4f4f4">80%</text>
<text x="1220" y="578.8" font-size="13" text-anchor="middle" textLength="48.5" lengthAdjust="spacingAndGlyphs" font-weight="bold" fill="#f4f4f4">100%</text>
<rect x="588" y="586.7" width="682" height="24.3" fill="#444444"/>
<text x="605" y="604.5" font-size="14.4" textLength="81" lengthAdjust="spacingAndGlyphs" font-weight="bold" fill="#efefef">x: CIE31</text>
<text x="776.8" y="604.7" font-size="15.8" textLength="62.55" lengthAdjust="spacingAndGlyphs" fill="#ececec">0,3351</text>
<text x="876.8" y="604.7" font-size="15.8" textLength="62.55" lengthAdjust="spacingAndGlyphs" fill="#ececec">0,3591</text>
<text x="976.8" y="604.7" font-size="15.8" textLength="62.55" lengthAdjust="spacingAndGlyphs" fill="#ececec">0,3845</text>
<text x="1076.8" y="604.7" font-size="15.8" textLength="62.55" lengthAdjust="spacingAndGlyphs" fill="#ececec">0,4090</text>
<text x="1176.8" y="604.7" font-size="15.8" textLength="62.55" lengthAdjust="spacingAndGlyphs" fill="#ececec">0,4363</text>
<rect x="588" y="610.87" width="682" height="24.3" fill="#808080"/>
<text x="605" y="628.67" font-size="14.4" textLength="81" lengthAdjust="spacingAndGlyphs" font-weight="bold" fill="#efefef">y: CIE31</text>
<text x="776.8" y="628.87" font-size="15.8" textLength="62.55" lengthAdjust="spacingAndGlyphs" fill="#ececec">0,3598</text>
<text x="876.8" y="628.87" font-size="15.8" textLength="62.55" lengthAdjust="spacingAndGlyphs" fill="#ececec">0,3928</text>
<text x="976.8" y="628.87" font-size="15.8" textLength="62.55" lengthAdjust="spacingAndGlyphs" fill="#ececec">0,4276</text>
<text x="1076.8" y="628.87" font-size="15.8" textLength="62.55" lengthAdjust="spacingAndGlyphs" fill="#ececec">0,4611</text>
<text x="1176.8" y="628.87" font-size="15.8" textLength="62.55" lengthAdjust="spacingAndGlyphs" fill="#ececec">0,4985</text>
<rect x="588" y="635.04" width="682" height="24.3" fill="#444444"/>
<text x="605" y="652.84" font-size="14.4" textLength="12" lengthAdjust="spacingAndGlyphs" font-weight="bold" fill="#efefef">Y</text>
<text x="776.8" y="653.04" font-size="15.8" textLength="85.45" lengthAdjust="spacingAndGlyphs" fill="#ececec">167,5408</text>
<text x="876.8" y="653.04" font-size="15.8" textLength="85.45" lengthAdjust="spacingAndGlyphs" fill="#ececec">160,2314</text>
<text x="976.8" y="653.04" font-size="15.8" textLength="85.45" lengthAdjust="spacingAndGlyphs" fill="#ececec">154,2181</text>
<text x="1076.8" y="653.04" font-size="15.8" textLength="85.45" lengthAdjust="spacingAndGlyphs" fill="#ececec">149,5793</text>
<text x="1176.8" y="653.04" font-size="15.8" textLength="85.45" lengthAdjust="spacingAndGlyphs" fill="#ececec">144,8851</text>
<rect x="588" y="659.21" width="682" height="24.3" fill="#808080"/>
<text x="605" y="677.01" font-size="14.4" textLength="147" lengthAdjust="spacingAndGlyphs" font-weight="bold" fill="#efefef">Target x:CIE31</text>
<text x="776.8" y="677.21" font-size="15.8" textLength="62.55" lengthAdjust="spacingAndGlyphs" fill="#ececec">0,3344</text>
<text x="876.8" y="677.21" font-size="15.8" textLength="62.55" lengthAdjust="spacingAndGlyphs" fill="#ececec">0,3564</text>
<text x="976.8" y="677.21" font-size="15.8" textLength="62.55" lengthAdjust="spacingAndGlyphs" fill="#ececec">0,3773</text>
<text x="1076.8" y="677.21" font-size="15.8" textLength="62.55" lengthAdjust="spacingAndGlyphs" fill="#ececec">0,3969</text>
<text x="1176.8" y="677.21" font-size="15.8" textLength="62.55" lengthAdjust="spacingAndGlyphs" fill="#ececec">0,4193</text>
<rect x="588" y="683.38" width="682" height="24.3" fill="#444444"/>
<text x="605" y="701.18" font-size="14.4" textLength="147" lengthAdjust="spacingAndGlyphs" font-weight="bold" fill="#efefef">Target y:CIE31</text>
<text x="776.8" y="701.38" font-size="15.8" textLength="62.55" lengthAdjust="spacingAndGlyphs" fill="#ececec">0,3648</text>
<text x="876.8" y="701.38" font-size="15.8" textLength="62.55" lengthAdjust="spacingAndGlyphs" fill="#ececec">0,4013</text>
<text x="976.8" y="701.38" font-size="15.8" textLength="62.55" lengthAdjust="spacingAndGlyphs" fill="#ececec">0,4358</text>
<text x="1076.8" y="701.38" font-size="15.8" textLength="62.55" lengthAdjust="spacingAndGlyphs" fill="#ececec">0,4682</text>
<text x="1176.8" y="701.38" font-size="15.8" textLength="62.55" lengthAdjust="spacingAndGlyphs" fill="#ececec">0,5053</text>
<rect x="588" y="707.55" width="682" height="24.3" fill="#808080"/>
<text x="605" y="725.35" font-size="14.4" textLength="85" lengthAdjust="spacingAndGlyphs" font-weight="bold" fill="#efefef">Target Y</text>
<text x="776.8" y="725.55" font-size="15.8" textLength="85.45" lengthAdjust="spacingAndGlyphs" fill="#ececec">171,5179</text>
<text x="876.8" y="725.55" font-size="15.8" textLength="85.45" lengthAdjust="spacingAndGlyphs" fill="#ececec">168,5073</text>
<text x="976.8" y="725.55" font-size="15.8" textLength="85.45" lengthAdjust="spacingAndGlyphs" fill="#ececec">166,1940</text>
<text x="1076.8" y="725.55" font-size="15.8" textLength="85.45" lengthAdjust="spacingAndGlyphs" fill="#ececec">164,3786</text>
<text x="1176.8" y="725.55" font-size="15.8" textLength="85.45" lengthAdjust="spacingAndGlyphs" fill="#ececec">162,6235</text>
<rect x="588" y="731.72" width="682" height="24.3" fill="#444444"/>
<text x="605" y="749.52" font-size="14.4" textLength="84" lengthAdjust="spacingAndGlyphs" font-weight="bold" fill="#efefef">ΔE 2000</text>
<text x="776.8" y="749.72" font-size="15.8" textLength="62.55" lengthAdjust="spacingAndGlyphs" fill="#ececec">2,4769</text>
<text x="876.8" y="749.72" font-size="15.8" textLength="62.55" lengthAdjust="spacingAndGlyphs" fill="#ececec">3,1417</text>
<text x="976.8" y="749.72" font-size="15.8" textLength="62.55" lengthAdjust="spacingAndGlyphs" fill="#ececec">3,6144</text>
<text x="1076.8" y="749.72" font-size="15.8" textLength="62.55" lengthAdjust="spacingAndGlyphs" fill="#ececec">4,1121</text>
<text x="1176.8" y="749.72" font-size="15.8" textLength="62.55" lengthAdjust="spacingAndGlyphs" fill="#ececec">4,6233</text>
<rect x="588" y="755.89" width="682" height="23.9" fill="#808080"/>
<text x="605" y="773.69" font-size="14.4" textLength="66" lengthAdjust="spacingAndGlyphs" font-weight="bold" fill="#efefef">ΔE ITP</text>
<text x="776.8" y="773.89" font-size="15.8" textLength="62.55" lengthAdjust="spacingAndGlyphs" fill="#ececec">2,9989</text>
<text x="876.8" y="773.89" font-size="15.8" textLength="62.55" lengthAdjust="spacingAndGlyphs" fill="#ececec">5,8800</text>
<text x="976.8" y="773.89" font-size="15.8" textLength="62.55" lengthAdjust="spacingAndGlyphs" fill="#ececec">8,0983</text>
<text x="1076.8" y="773.89" font-size="15.8" textLength="74" lengthAdjust="spacingAndGlyphs" fill="#ececec">10,0711</text>
<text x="1176.8" y="773.89" font-size="15.8" textLength="74" lengthAdjust="spacingAndGlyphs" fill="#ececec">12,5236</text>
<rect x="0" y="802" width="1560" height="61" fill="url(#g41)"/>
<path d="M0 863v-57a4 4 0 0 1 4 -4h36a4 4 0 0 1 4 4v57z" fill="url(#g42)"/>
<circle cx="21.7" cy="811" r="7.2" fill="url(#g44)"/><path d="M18.1 812.6l3.6 -3.9l3.6 3.9z" fill="#333"/>
<rect x="4.4" y="828.5" width="34.2" height="29.4" rx="2.8" fill="#ffff00" stroke="#b8b800" stroke-width="1"/>
<path d="M50 863v-56.5a4.5 4.5 0 0 1 4.5 -4.5h141a4.5 4.5 0 0 1 4.5 4.5v56.5z" fill="url(#g42)"/>
<rect x="55.7" y="807.3" width="139.5" height="36" rx="3.5" fill="#c0c0a6" stroke="#9d9d88" stroke-width="1"/>
<text x="125" y="858" font-size="11" text-anchor="middle" textLength="19.5" lengthAdjust="spacingAndGlyphs" fill="#2c2c2c">20%</text>
<path d="M202 863v-56.5a4.5 4.5 0 0 1 4.5 -4.5h141a4.5 4.5 0 0 1 4.5 4.5v56.5z" fill="url(#g42)"/>
<rect x="207.7" y="807.3" width="139.5" height="36" rx="3.5" fill="#c1be8a" stroke="#9e9c71" stroke-width="1"/>
<text x="277" y="858" font-size="11" text-anchor="middle" textLength="19.5" lengthAdjust="spacingAndGlyphs" fill="#2c2c2c">40%</text>
<path d="M354 863v-56.5a4.5 4.5 0 0 1 4.5 -4.5h141a4.5 4.5 0 0 1 4.5 4.5v56.5z" fill="url(#g42)"/>
<rect x="359.7" y="807.3" width="139.5" height="36" rx="3.5" fill="#c0be68" stroke="#9d9c55" stroke-width="1"/>
<text x="429" y="858" font-size="11" text-anchor="middle" textLength="19.5" lengthAdjust="spacingAndGlyphs" fill="#2c2c2c">60%</text>
<path d="M506 863v-56.5a4.5 4.5 0 0 1 4.5 -4.5h141a4.5 4.5 0 0 1 4.5 4.5v56.5z" fill="url(#g42)"/>
<rect x="511.7" y="807.3" width="139.5" height="36" rx="3.5" fill="#c2c04e" stroke="#9f9d40" stroke-width="1"/>
<text x="581" y="858" font-size="11" text-anchor="middle" textLength="19.5" lengthAdjust="spacingAndGlyphs" fill="#2c2c2c">80%</text>
<path d="M658 863v-56.5a4.5 4.5 0 0 1 4.5 -4.5h141a4.5 4.5 0 0 1 4.5 4.5v56.5z" fill="url(#g43)"/>
<rect x="663.7" y="807.3" width="139.5" height="36" rx="3.5" fill="#c4c000" stroke="#a19d00" stroke-width="1"/>
<text x="733" y="858" font-size="11.5" text-anchor="middle" textLength="27" lengthAdjust="spacingAndGlyphs" font-weight="bold" fill="#fff">100%</text>
<rect x="1236" y="802" width="330" height="61" fill="#2e2e2e"/>
<path d="M1241 863v-57.5a3.5 3.5 0 0 1 3.5 -3.5h41a3.5 3.5 0 0 1 3.5 3.5v57.5z" fill="url(#g45)"/>
<line x1="1241" y1="820.3" x2="1289" y2="820.3" stroke="#333" stroke-width="1.2"/>
<circle cx="1265.6" cy="811.1" r="7.2" fill="url(#g47)"/><path d="M1262 812.7l3.6 -3.9l3.6 3.9z" fill="#333"/>
<rect x="1250.8" y="827.5" width="28.3" height="27.8" rx="4" fill="url(#g48)" stroke="#222" stroke-width="2.3"/>
<rect x="1258.3" y="835" width="13.4" height="13.5" fill="url(#g49)"/>
<path d="M1290.3 832.3v-27.3a3 3 0 0 1 3 -3h42.59a0.01 0.01 0 0 1 0.01 0.01v30.29z" fill="url(#g45)"/>
<circle cx="1313.4" cy="816.9" r="10" fill="url(#g50)"/>
<rect x="1309.4" y="812.9" width="8" height="8" fill="#333"/>
<rect x="1337.1" y="802" width="43.9" height="30.3" fill="url(#g45)"/>
<circle cx="1359.35" cy="816.9" r="10" fill="url(#g50)"/>
<path d="M1356.15 812.1v9.6l8.4 -4.8z" fill="#333"/>
<rect x="1382.2" y="802" width="43.7" height="30.3" fill="url(#g45)"/>
<circle cx="1404.35" cy="816.9" r="10" fill="url(#g50)"/>
<path d="M1401.15 812.2h-2.6v9.4h2.6M1407.55 812.2h2.6v9.4h-2.6" fill="none" stroke="#2c2c2c" stroke-width="2.2"/><path d="M1401.95 816.9h1.8M1404.95 816.9h1.8" stroke="#2c2c2c" stroke-width="1.8"/>
<rect x="1427.1" y="802" width="43.8" height="30.3" fill="url(#g45)"/>
<circle cx="1449.3" cy="816.9" r="10" fill="url(#g50)"/>
<path d="M1449.3 816.9c-2.2 -3.2 -6.2 -3.2 -6.2 0s4 3.2 6.2 0s6.2 -3.2 6.2 0s-4 3.2 -6.2 0z" fill="none" stroke="#2c2c2c" stroke-width="1.5"/>
<rect x="1472.1" y="802" width="43.7" height="30.3" fill="url(#g45)"/>
<circle cx="1494.25" cy="816.9" r="10" fill="url(#g50)"/>
<path d="M1489.65 816.1a5 5 0 0 1 8.6 -2.6M1498.85 817.7a5 5 0 0 1 -8.6 2.6" fill="none" stroke="#2c2c2c" stroke-width="2.5"/><path d="M1496.85 814.7l3.4 -0.2l-0.4 -3.6zM1491.65 819.1l-3.4 0.2l0.4 3.6z" fill="#2c2c2c" stroke="#2c2c2c" stroke-width="1.2"/>
<rect x="1517" y="802" width="43.8" height="30.3" fill="url(#g45)"/>
<circle cx="1539.2" cy="816.9" r="10" fill="url(#g50)"/>
<path d="M1290.3 863.3v-27a3 3 0 0 1 3 -3h131.99a0.01 0.01 0 0 1 0.01 0.01v29.99z" fill="url(#g46)"/>
<rect x="1427.5" y="833.3" width="133" height="30" fill="url(#g46)"/>
<circle cx="1321.2" cy="847.9" r="10" fill="url(#g50)"/>
<path d="M1325.4 843.3l-3.8 4.6l3.8 4.6M1321.4 843.3l-3.8 4.6l3.8 4.6" fill="none" stroke="#333" stroke-width="1.5"/>
<circle cx="1534.6" cy="847.9" r="10" fill="url(#g50)"/>
<path d="M1530.4 843.3l3.8 4.6l-3.8 4.6M1534.4 843.3l3.8 4.6l-3.8 4.6" fill="none" stroke="#333" stroke-width="1.5"/>
<text x="1347" y="855.6" font-size="21.5" textLength="52" lengthAdjust="spacingAndGlyphs" fill="#303030" stroke="#303030" stroke-width=".45">Back</text>
<text x="1453" y="855.6" font-size="21.5" textLength="53.5" lengthAdjust="spacingAndGlyphs" fill="#303030" stroke="#303030" stroke-width=".45">Next</text></svg>
<div style="position:absolute;left:953px;top:58px;width:600px;height:462px"><div style="position:absolute;left:0;top:0;width:600px;height:462px;overflow:hidden;">
<div style="position:absolute;left:0;top:0;width:600px;height:462px;background-blend-mode:multiply;background:conic-gradient(from 185.35deg at 175.44px 340.42px,#ff00ff 0deg,#ff00ff 39deg,#ffffff 39.25deg,#ffffff 180deg,#ffe5ff 181.25deg,#ffcaff 182.75deg,#ffb1ff 184.5deg,#ff98ff 186.5deg,#ff82ff 188.75deg,#ff6bff 191.5deg,#ff56ff 194.75deg,#ff41ff 198.5deg,#ff2dff 203.25deg,#ff1aff 209deg,#ff06ff 216.25deg,#ff00ff 219.25deg,#ff00ff 360deg),conic-gradient(from 314.88deg at 125px 28.87px,#ffffff 0deg,#ffffff 83.5deg,#ffff00 83.75deg,#ffff00 140.5deg,#ffff29 149.75deg,#ffff4d 156.75deg,#ffff6e 162.5deg,#ffff8f 167.5deg,#ffffaf 171.75deg,#ffffd0 175.5deg,#fffff1 178.75deg,#ffffff 180deg,#ffffff 320.25deg,#ffff00 320.5deg,#ffff00 334.25deg,#ffff41 334.5deg,#ffff63 340.75deg,#ffff84 346deg,#ffffa5 350.5deg,#ffffc5 354.25deg,#ffffe4 357.5deg,#ffffff 360deg)"></div>
<div style="position:absolute;left:0;top:0;width:600px;height:462px;background-blend-mode:multiply;background:conic-gradient(from 185.35deg at 175.44px 340.42px,#00ffff 0deg,#00ffff 165.25deg,#01ffff 165.5deg,#30ffff 168.75deg,#5fffff 171.75deg,#8fffff 174.5deg,#bfffff 177deg,#eeffff 179.25deg,#ffffff 180deg,#ffffff 345.25deg,#00ffff 345.5deg,#00ffff 360deg),conic-gradient(from 80.57deg at 450.7px 59.38px,#ffff00 0deg,#ffff00 14.75deg,#ffffff 15deg,#ffffff 180deg,#ffffce 182.25deg,#ffffa2 184.5deg,#ffff75 187deg,#ffff48 189.75deg,#ffff1c 192.75deg,#ffff00 194.75deg,#ffff00 250.75deg,#ffffff 251deg,#ffffff 275.5deg,#ffff00 275.75deg,#ffff00 360deg);clip-path:polygon(198.42px 101.94px,759.03px -5871.81px,-5160.04px -4889.66px,-5720.65px 1084.09px)"></div>
<div style="position:absolute;left:0;top:0;width:600px;height:462px;background-blend-mode:multiply;background:conic-gradient(from 314.88deg at 125px 28.87px,#ffffff 0deg,#dcffff 3.25deg,#b8ffff 7deg,#95ffff 11.25deg,#71ffff 16.25deg,#4cffff 22deg,#24ffff 29deg,#00ffff 36deg,#00ffff 83.5deg,#ffffff 83.75deg,#ffffff 180deg,#dcffff 183.25deg,#b8ffff 187deg,#95ffff 191.25deg,#71ffff 196.25deg,#4cffff 202deg,#24ffff 209deg,#00ffff 216deg,#00ffff 334.25deg,#ffffff 334.5deg,#ffffff 360deg),conic-gradient(from 80.57deg at 450.7px 59.38px,#ff00ff 0deg,#ff00ff 144deg,#ff15ff 151.25deg,#ff29ff 157deg,#ff3dff 161.5deg,#ff52ff 165.25deg,#ff68ff 168.5deg,#ff7fff 171.25deg,#ff96ff 173.5deg,#ffafff 175.5deg,#ffcaff 177.25deg,#ffe4ff 178.75deg,#ffffff 180deg,#ffffff 250.75deg,#ff00ff 251deg,#ff00ff 275.5deg,#ffffff 275.75deg,#ffffff 323.75deg,#ff00ff 324deg,#ff00ff 360deg);clip-path:polygon(198.07px 100.63px,-5721px 1082.78px,-1468.18px 5315.23px,4450.89px 4333.07px)"></div>
<svg style="position:absolute;left:0;top:0" width="600" height="462"><path fill-rule="evenodd" fill="#000" fill-opacity=".4" d="M-10 -10H610V472H-10ZM450.7 59.38L125 28.87L175.44 340.42Z"/><path fill-rule="evenodd" fill="#262626" d="M-10 -10H610V472H-10ZM255.76 449.74L254.5 449.74L252.22 448.99L246.08 444.58L234.75 435.14L216.12 419.68L187.66 394.92L180.68 388.16L173.11 380.34L164.56 370.83L154.82 359.25L144.1 345.74L132.75 330.57L120.84 313.69L108.39 295.02L95.64 274.77L82.81 253.46L70.11 231.54L57.9 209.26L46.7 187.07L36.81 165.55L28.15 145.02L20.66 125.81L14.47 108.28L9.6 92.66L5.97 78.94L3.46 66.94L1.94 56.57L1.37 47.72L1.67 40.08L2.76 33.47L4.63 27.84L7.23 23.14L10.44 19.32L14.23 16.36L18.49 14.15L23.12 12.58L28.06 11.54L33.29 10.9L38.75 10.5L44.39 10.29L50.07 10.2L55.73 10.21L61.44 10.3L67.24 10.48L73.16 10.73L79.23 11.07L112.7 13.81L153.11 18.03L202.57 23.59L262.34 30.46L331.48 38.41L403.51 46.71L469.13 54.24L520.21 60.12L556.49 64.29L583.02 67.35L600.48 69.36L610.8 70.55L616.14 71.16L619.94 71.6L622.56 71.91L623.37 72Z"/></svg>
</div></div>
<svg width="1560" height="863" viewBox="0 0 1560 863" style="position:absolute;left:0;top:0" font-family='"Liberation Sans", sans-serif'><path d="M953.5 57.7V519.5H1553.5V57.7Z" fill="none" stroke="#c4c4c4" stroke-width="1.2"/>
<line x1="953.3" y1="519.5" x2="953.3" y2="525" stroke="#d0d0d0" stroke-width="1.5"/>
<text x="953.3" y="540" font-size="12.3" text-anchor="middle" fill="#d2d2d2">0</text>
<line x1="947.5" y1="520.3" x2="953" y2="520.3" stroke="#d0d0d0" stroke-width="1.5"/>
<text x="947.2" y="524.8" font-size="12.3" text-anchor="end" fill="#d2d2d2">0</text>
<line x1="1003.3" y1="519.5" x2="1003.3" y2="525" stroke="#d0d0d0" stroke-width="1.5"/>
<text x="1003.3" y="540" font-size="12.3" text-anchor="middle" textLength="26.33" lengthAdjust="spacingAndGlyphs" fill="#d2d2d2">0,05</text>
<line x1="947.5" y1="481.8" x2="953" y2="481.8" stroke="#d0d0d0" stroke-width="1.5"/>
<text x="947.2" y="486.3" font-size="12.3" text-anchor="end" textLength="26.33" lengthAdjust="spacingAndGlyphs" fill="#d2d2d2">0,05</text>
<line x1="1053.3" y1="519.5" x2="1053.3" y2="525" stroke="#d0d0d0" stroke-width="1.5"/>
<text x="1053.3" y="540" font-size="12.3" text-anchor="middle" textLength="18.81" lengthAdjust="spacingAndGlyphs" fill="#d2d2d2">0,1</text>
<line x1="947.5" y1="443.3" x2="953" y2="443.3" stroke="#d0d0d0" stroke-width="1.5"/>
<text x="947.2" y="447.8" font-size="12.3" text-anchor="end" textLength="18.81" lengthAdjust="spacingAndGlyphs" fill="#d2d2d2">0,1</text>
<line x1="1103.3" y1="519.5" x2="1103.3" y2="525" stroke="#d0d0d0" stroke-width="1.5"/>
<text x="1103.3" y="540" font-size="12.3" text-anchor="middle" textLength="26.33" lengthAdjust="spacingAndGlyphs" fill="#d2d2d2">0,15</text>
<line x1="947.5" y1="404.8" x2="953" y2="404.8" stroke="#d0d0d0" stroke-width="1.5"/>
<text x="947.2" y="409.3" font-size="12.3" text-anchor="end" textLength="26.33" lengthAdjust="spacingAndGlyphs" fill="#d2d2d2">0,15</text>
<line x1="1153.3" y1="519.5" x2="1153.3" y2="525" stroke="#d0d0d0" stroke-width="1.5"/>
<text x="1153.3" y="540" font-size="12.3" text-anchor="middle" textLength="18.81" lengthAdjust="spacingAndGlyphs" fill="#d2d2d2">0,2</text>
<line x1="947.5" y1="366.3" x2="953" y2="366.3" stroke="#d0d0d0" stroke-width="1.5"/>
<text x="947.2" y="370.8" font-size="12.3" text-anchor="end" textLength="18.81" lengthAdjust="spacingAndGlyphs" fill="#d2d2d2">0,2</text>
<line x1="1203.3" y1="519.5" x2="1203.3" y2="525" stroke="#d0d0d0" stroke-width="1.5"/>
<text x="1203.3" y="540" font-size="12.3" text-anchor="middle" textLength="26.33" lengthAdjust="spacingAndGlyphs" fill="#d2d2d2">0,25</text>
<line x1="947.5" y1="327.8" x2="953" y2="327.8" stroke="#d0d0d0" stroke-width="1.5"/>
<text x="947.2" y="332.3" font-size="12.3" text-anchor="end" textLength="26.33" lengthAdjust="spacingAndGlyphs" fill="#d2d2d2">0,25</text>
<line x1="1253.3" y1="519.5" x2="1253.3" y2="525" stroke="#d0d0d0" stroke-width="1.5"/>
<text x="1253.3" y="540" font-size="12.3" text-anchor="middle" textLength="18.81" lengthAdjust="spacingAndGlyphs" fill="#d2d2d2">0,3</text>
<line x1="947.5" y1="289.3" x2="953" y2="289.3" stroke="#d0d0d0" stroke-width="1.5"/>
<text x="947.2" y="293.8" font-size="12.3" text-anchor="end" textLength="18.81" lengthAdjust="spacingAndGlyphs" fill="#d2d2d2">0,3</text>
<line x1="1303.3" y1="519.5" x2="1303.3" y2="525" stroke="#d0d0d0" stroke-width="1.5"/>
<text x="1303.3" y="540" font-size="12.3" text-anchor="middle" textLength="26.33" lengthAdjust="spacingAndGlyphs" fill="#d2d2d2">0,35</text>
<line x1="947.5" y1="250.8" x2="953" y2="250.8" stroke="#d0d0d0" stroke-width="1.5"/>
<text x="947.2" y="255.3" font-size="12.3" text-anchor="end" textLength="26.33" lengthAdjust="spacingAndGlyphs" fill="#d2d2d2">0,35</text>
<line x1="1353.3" y1="519.5" x2="1353.3" y2="525" stroke="#d0d0d0" stroke-width="1.5"/>
<text x="1353.3" y="540" font-size="12.3" text-anchor="middle" textLength="18.81" lengthAdjust="spacingAndGlyphs" fill="#d2d2d2">0,4</text>
<line x1="947.5" y1="212.3" x2="953" y2="212.3" stroke="#d0d0d0" stroke-width="1.5"/>
<text x="947.2" y="216.8" font-size="12.3" text-anchor="end" textLength="18.81" lengthAdjust="spacingAndGlyphs" fill="#d2d2d2">0,4</text>
<line x1="1403.3" y1="519.5" x2="1403.3" y2="525" stroke="#d0d0d0" stroke-width="1.5"/>
<text x="1403.3" y="540" font-size="12.3" text-anchor="middle" textLength="26.33" lengthAdjust="spacingAndGlyphs" fill="#d2d2d2">0,45</text>
<line x1="947.5" y1="173.8" x2="953" y2="173.8" stroke="#d0d0d0" stroke-width="1.5"/>
<text x="947.2" y="178.3" font-size="12.3" text-anchor="end" textLength="26.33" lengthAdjust="spacingAndGlyphs" fill="#d2d2d2">0,45</text>
<line x1="1453.3" y1="519.5" x2="1453.3" y2="525" stroke="#d0d0d0" stroke-width="1.5"/>
<text x="1453.3" y="540" font-size="12.3" text-anchor="middle" textLength="18.81" lengthAdjust="spacingAndGlyphs" fill="#d2d2d2">0,5</text>
<line x1="947.5" y1="135.3" x2="953" y2="135.3" stroke="#d0d0d0" stroke-width="1.5"/>
<text x="947.2" y="139.8" font-size="12.3" text-anchor="end" textLength="18.81" lengthAdjust="spacingAndGlyphs" fill="#d2d2d2">0,5</text>
<line x1="1503.3" y1="519.5" x2="1503.3" y2="525" stroke="#d0d0d0" stroke-width="1.5"/>
<text x="1503.3" y="540" font-size="12.3" text-anchor="middle" textLength="26.33" lengthAdjust="spacingAndGlyphs" fill="#d2d2d2">0,55</text>
<line x1="947.5" y1="96.8" x2="953" y2="96.8" stroke="#d0d0d0" stroke-width="1.5"/>
<text x="947.2" y="101.3" font-size="12.3" text-anchor="end" textLength="26.33" lengthAdjust="spacingAndGlyphs" fill="#d2d2d2">0,55</text><rect x="1189.3" y="144.5" width="13" height="13" fill="none" stroke="#fff" stroke-width="1.3" stroke-opacity="0.88"/>
<rect x="1239.5" y="135.4" width="13" height="13" fill="none" stroke="#fff" stroke-width="1.3" stroke-opacity="0.88"/>
<rect x="1285.5" y="128.4" width="13" height="13" fill="none" stroke="#fff" stroke-width="1.3" stroke-opacity="0.88"/>
<rect x="1336.5" y="119.4" width="13" height="13" fill="none" stroke="#fff" stroke-width="1.3" stroke-opacity="0.88"/>
<rect x="1396.5" y="109.7" width="13" height="13" fill="none" stroke="#fff" stroke-width="1.3" stroke-opacity="0.88"/>
<rect x="1124.5" y="131.3" width="13" height="13" fill="none" stroke="#fff" stroke-width="1.3" stroke-opacity="0.88"/>
<rect x="1108.6" y="116.1" width="13" height="13" fill="none" stroke="#fff" stroke-width="1.3" stroke-opacity="0.88"/>
<rect x="1093.9" y="102.4" width="13" height="13" fill="none" stroke="#fff" stroke-width="1.3" stroke-opacity="0.88"/>
<rect x="1082.4" y="90.2" width="13" height="13" fill="none" stroke="#fff" stroke-width="1.3" stroke-opacity="0.88"/>
<rect x="1071" y="79.4" width="13" height="13" fill="none" stroke="#fff" stroke-width="1.3" stroke-opacity="0.88"/>
<rect x="1141.5" y="179.6" width="13" height="13" fill="none" stroke="#fff" stroke-width="1.3" stroke-opacity="0.88"/>
<rect x="1138.3" y="214.4" width="13" height="13" fill="none" stroke="#fff" stroke-width="1.3" stroke-opacity="0.88"/>
<rect x="1134.4" y="256.3" width="13" height="13" fill="none" stroke="#fff" stroke-width="1.3" stroke-opacity="0.88"/>
<rect x="1129.4" y="310.3" width="13" height="13" fill="none" stroke="#fff" stroke-width="1.3" stroke-opacity="0.88"/>
<rect x="1122.3" y="390.5" width="13" height="13" fill="none" stroke="#fff" stroke-width="1.3" stroke-opacity="0.88"/>
<rect x="1132.9" y="154.6" width="13" height="13" fill="none" stroke="#fff" stroke-width="1.3" stroke-opacity="0.88"/>
<rect x="1120.7" y="155.5" width="13" height="13" fill="none" stroke="#fff" stroke-width="1.3" stroke-opacity="0.88"/>
<rect x="1108.5" y="158.5" width="13" height="13" fill="none" stroke="#fff" stroke-width="1.3" stroke-opacity="0.88"/>
<rect x="1096.7" y="159.5" width="13" height="13" fill="none" stroke="#fff" stroke-width="1.3" stroke-opacity="0.88"/>
<rect x="1085.5" y="162.5" width="13" height="13" fill="none" stroke="#fff" stroke-width="1.3" stroke-opacity="0.88"/>
<rect x="1160.7" y="167.1" width="13" height="13" fill="none" stroke="#fff" stroke-width="1.3" stroke-opacity="0.88"/>
<rect x="1178.6" y="185.4" width="13" height="13" fill="none" stroke="#fff" stroke-width="1.3" stroke-opacity="0.88"/>
<rect x="1196.3" y="204.4" width="13" height="13" fill="none" stroke="#fff" stroke-width="1.3" stroke-opacity="0.88"/>
<rect x="1220.5" y="228.4" width="13" height="13" fill="none" stroke="#fff" stroke-width="1.3" stroke-opacity="0.88"/>
<rect x="1251.4" y="257.4" width="13" height="13" fill="none" stroke="#fff" stroke-width="1.3" stroke-opacity="0.88"/>
<rect x="1145.68" y="135.37" width="13" height="13" fill="none" stroke="#fff" stroke-width="1.3" stroke-opacity="0.88"/>
<rect x="1147.01" y="120.66" width="13" height="13" fill="none" stroke="#fff" stroke-width="1.3" stroke-opacity="0.88"/>
<rect x="1148.2" y="108.17" width="13" height="13" fill="none" stroke="#fff" stroke-width="1.3" stroke-opacity="0.88"/>
<rect x="1149.2" y="97.53" width="13" height="13" fill="none" stroke="#fff" stroke-width="1.3" stroke-opacity="0.88"/>
<rect x="1150.21" y="86.46" width="13" height="13" fill="none" stroke="#fff" stroke-width="1.3" stroke-opacity="0.88"/>
<rect x="1143.8" y="151.9" width="12.6" height="12.6" fill="none" stroke="#000" stroke-width="1.7" stroke-opacity="1"/>
<circle cx="1182.4" cy="150.5" r="3.9" fill="#baa2a2" stroke="#101010" stroke-width="1.1"/>
<circle cx="1216.6" cy="140.4" r="3.9" fill="#ba8f8f" stroke="#101010" stroke-width="1.1"/>
<circle cx="1251.4" cy="132.3" r="3.9" fill="#ba7777" stroke="#101010" stroke-width="1.1"/>
<circle cx="1289.5" cy="122.4" r="3.9" fill="#ba5757" stroke="#101010" stroke-width="1.1"/>
<circle cx="1325.5" cy="113.3" r="3.9" fill="#ba0a0a" stroke="#101010" stroke-width="1.1"/>
<circle cx="1140.5" cy="141.4" r="3.9" fill="#a2baa2" stroke="#101010" stroke-width="1.1"/>
<circle cx="1131.5" cy="125.4" r="3.9" fill="#8fba8f" stroke="#101010" stroke-width="1.1"/>
<circle cx="1122.4" cy="111.4" r="3.9" fill="#77ba77" stroke="#101010" stroke-width="1.1"/>
<circle cx="1114.6" cy="97.2" r="3.9" fill="#57ba57" stroke="#101010" stroke-width="1.1"/>
<circle cx="1108.4" cy="85.4" r="3.9" fill="#0aba0a" stroke="#101010" stroke-width="1.1"/>
<circle cx="1143.6" cy="182.3" r="3.9" fill="#a2a2ba" stroke="#101010" stroke-width="1.1"/>
<circle cx="1137.5" cy="209.4" r="3.9" fill="#8f8fba" stroke="#101010" stroke-width="1.1"/>
<circle cx="1129.4" cy="238.4" r="3.9" fill="#7777ba" stroke="#101010" stroke-width="1.1"/>
<circle cx="1120.4" cy="271.8" r="3.9" fill="#5757ba" stroke="#101010" stroke-width="1.1"/>
<circle cx="1110.4" cy="310.4" r="3.9" fill="#0a0aba" stroke="#101010" stroke-width="1.1"/>
<circle cx="1141.4" cy="160.3" r="3.9" fill="#a2baba" stroke="#101010" stroke-width="1.1"/>
<circle cx="1133.6" cy="163.2" r="3.9" fill="#8fbaba" stroke="#101010" stroke-width="1.1"/>
<circle cx="1124.5" cy="164.3" r="3.9" fill="#77baba" stroke="#101010" stroke-width="1.1"/>
<circle cx="1117.5" cy="167.3" r="3.9" fill="#57baba" stroke="#101010" stroke-width="1.1"/>
<circle cx="1108.4" cy="169.4" r="3.9" fill="#0ababa" stroke="#101010" stroke-width="1.1"/>
<circle cx="1157.4" cy="171.5" r="3.9" fill="#baa2ba" stroke="#101010" stroke-width="1.1"/>
<circle cx="1165.5" cy="185.5" r="3.9" fill="#ba8fba" stroke="#101010" stroke-width="1.1"/>
<circle cx="1174.5" cy="199.4" r="3.9" fill="#ba77ba" stroke="#101010" stroke-width="1.1"/>
<circle cx="1183.4" cy="215.5" r="3.9" fill="#ba57ba" stroke="#101010" stroke-width="1.1"/>
<circle cx="1194.9" cy="233.4" r="3.9" fill="#ba0aba" stroke="#101010" stroke-width="1.1"/>
<circle cx="1154.5" cy="144.4" r="3.9" fill="#babaa2" stroke="#101010" stroke-width="1.1"/>
<circle cx="1157.5" cy="130.4" r="3.9" fill="#baba8f" stroke="#101010" stroke-width="1.1"/>
<circle cx="1161.5" cy="116.6" r="3.9" fill="#baba77" stroke="#101010" stroke-width="1.1"/>
<circle cx="1165.5" cy="104.6" r="3.9" fill="#baba57" stroke="#101010" stroke-width="1.1"/>
<circle cx="1168.5" cy="93.4" r="3.9" fill="#baba0a" stroke="#101010" stroke-width="1.1"/>
<circle cx="1150.6" cy="158.4" r="3.7" fill="#fff" stroke="#101010" stroke-width="1.1"/><rect x="1346" y="373.8" width="206.3" height="143.8" fill="#2d2d2d"/></svg>
<div style="position:absolute;left:1349px;top:377px;width:199px;height:134.5px;overflow:hidden"><div style="position:absolute;left:0;top:0;width:200px;height:135px;overflow:hidden;">
<div style="position:absolute;left:0;top:0;width:200px;height:135px;background-blend-mode:multiply;background:conic-gradient(from 36.65deg at -979.2px 1269.31px,#ffffff 0deg,#ffffff 5.23deg,#ffe2ff 6.69deg,#ffc6ff 8.32deg,#ffabff 10.15deg,#ffa8ff 10.42deg),conic-gradient(from 107.07deg at -379.2px -188.69px,#ffff00 0deg,#ffff00 11.33deg,#ffff20 24.36deg)"></div>
<div style="position:absolute;left:0;top:0;width:200px;height:135px;background-blend-mode:multiply;background:conic-gradient(from 36.65deg at -979.2px 1269.31px,#a1ffff 0deg,#c3ffff 2.09deg,#e6ffff 3.98deg,#ffffff 5.24deg,#ffffff 10.42deg),conic-gradient(from 291.48deg at 980.8px 540.31px,#ffff21 0deg,#ffff09 4.7deg,#ffff00 6.83deg,#ffff00 14.17deg);clip-path:polygon(-328.07px 543.74px,3676.38px -3924.4px,-2323.61px -3913.38px,-6328.06px 554.77px)"></div>
<div style="position:absolute;left:0;top:0;width:200px;height:135px;background-blend-mode:multiply;background:conic-gradient(from 107.07deg at -379.2px -188.69px,#ffffff 0deg,#ffffff 24.36deg),conic-gradient(from 291.48deg at 980.8px 540.31px,#ffffff 0deg,#ffffff 14.17deg);clip-path:polygon(-327.85px 542.42px,-6327.84px 553.45px,-5909.98px 6538.88px,90.01px 6527.86px)"></div>
<svg style="position:absolute;left:0;top:0" width="200" height="135"><path fill-rule="evenodd" fill="#000" fill-opacity=".4" d="M-10 -10H210V145H-10ZM980.8 540.31L-379.2 -188.69L-979.2 1269.31Z"/></svg>
</div></div>
<svg width="1560" height="863" viewBox="0 0 1560 863" style="position:absolute;left:0;top:0" font-family='"Liberation Sans", sans-serif'><rect x="1349" y="377" width="199" height="134.5" fill="none" stroke="#9c9c9c" stroke-width="1.3"/>
<rect x="1440.5" y="437.5" width="13" height="13" fill="none" stroke="#fff" stroke-width="1.4" stroke-opacity="0.95"/>
<circle cx="1515.4" cy="461.2" r="3.8" fill="#c8c020" stroke="#101010" stroke-width="1.2"/></svg>
</body></html>
